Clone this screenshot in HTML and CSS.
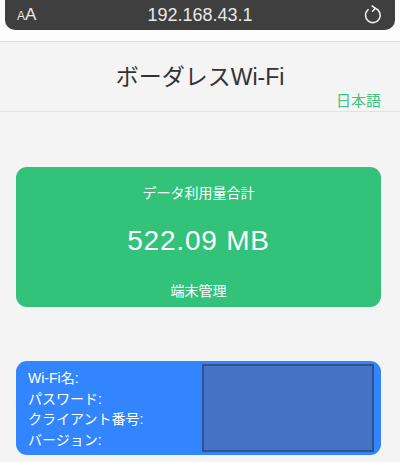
FILE: index.html
```html
<!DOCTYPE html>
<html lang="ja">
<head>
<meta charset="UTF-8" />
<title>ボーダレスWi-Fi</title>
<link rel="stylesheet" href="styles.css">
</head>
<body>

<!-- アドレスバー -->
<div class="chrome">
  <div class="address-bar">
    <span class="aa"><small>A</small>A</span>
    <span class="url">192.168.43.1</span>
    <svg class="reload" width="20" height="20" viewBox="0 0 18 18">
      <path d="M11 3 A6.6 6.6 0 1 1 4.6 4.2" fill="none" stroke="#eee" stroke-width="1.4" stroke-linecap="round"/>
      <path d="M8.2 0.8 L11.1 3 L8.6 5.6" fill="none" stroke="#eee" stroke-width="1.4" stroke-linecap="round" stroke-linejoin="round"/>
    </svg>
  </div>
</div>

<div class="header">
  <h1>ボーダレスWi-Fi</h1>
  <div class="lang">日本語</div>
</div>

<div class="content">
  <div class="card usage">
    <div class="usage-label">データ利用量合計</div>
    <div class="usage-value">522.09 MB</div>
    <div class="usage-link">端末管理</div>
  </div>

  <div class="card info">
    <div class="info-labels">
      <div>Wi-Fi名:</div>
      <div>パスワード:</div>
      <div>クライアント番号:</div>
      <div>バージョン:</div>
    </div>
    <div class="info-values"></div>
  </div>
</div>

</body>
</html>
```

FILE: styles.css
```css
/* 基本スタイル */
body {
  margin: 0;
  background: #f4f4f4;
  font-family: "Liberation Sans", "Noto Sans CJK JP", sans-serif;
  color: #333;
}

/* ブラウザ風アドレスバー */
.chrome {
  background: #fdfdfd;
  height: 41px;
  border-bottom: 1px solid #dcdcdc;
}
.address-bar {
  margin: 0 5px;
  height: 30px;
  background: #3f3f3f;
  border-radius: 0 0 10px 10px;
  display: flex;
  align-items: center;
  padding: 0 12px 0 12px;
  color: #e8e8e8;
}
.aa {
  font-size: 17px;
  width: 40px;
}
.aa small {
  font-size: 12px;
}
.url {
  flex: 1;
  text-align: center;
  font-size: 18px;
  margin-right: 20px;
}
.reload {
  display: block;
}

/* ヘッダー */
.header {
  height: 69px;
  border-bottom: 1px solid #e2e2e2;
  display: flex;
  flex-direction: column;
}
.header h1 {
  margin: 20px 0 0;
  font-size: 23px;
  line-height: 30px;
  font-weight: normal;
  text-align: center;
  color: #333;
}
.lang {
  padding-right: 19px;
  text-align: right;
  font-size: 15px;
  line-height: 18px;
  color: #3cc480;
}

/* カード */
.content {
  padding: 55px 19px 0 16px;
}
.card {
  border-radius: 11px;
  color: #fff;
}
.usage {
  background: #32c27a;
  height: 140px;
  display: flex;
  flex-direction: column;
  align-items: center;
  box-sizing: border-box;
  padding-top: 15px;
}
.usage-label {
  font-size: 14px;
}
.usage-value {
  font-size: 28px;
  letter-spacing: 0.8px;
  margin-top: 23px;
}
.usage-link {
  font-size: 14px;
  margin-top: 23px;
}

.info {
  margin-top: 54px;
  background: #3385ff;
  height: 94px;
  display: flex;
  box-sizing: border-box;
  padding: 3px 7px 3px 12px;
}
.info-labels {
  width: 174px;
  font-size: 14px;
  line-height: 20.5px;
  padding-top: 4px;
}
.info-values {
  flex: 1;
  background: #4472c4;
  border: 2px solid #2f528f;
}
```
